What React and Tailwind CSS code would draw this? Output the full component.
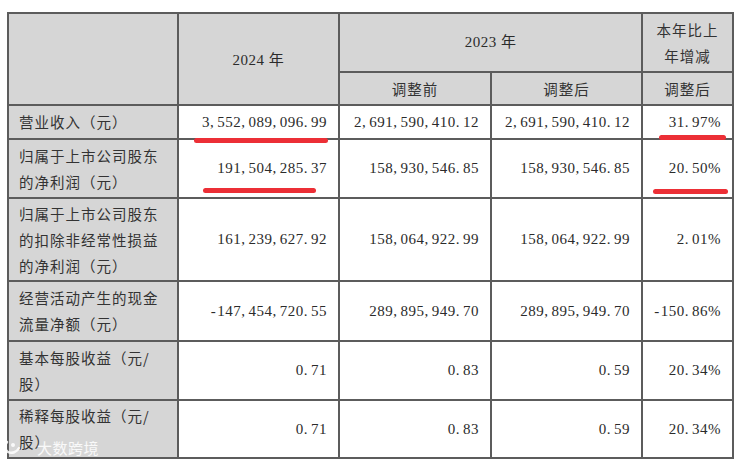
import React from "react";

const num = "font-['Liberation_Serif','Noto_Sans_CJK_SC',serif] text-[15px] tracking-[0.5px] text-[#2b2b2b]";
const cjk = "font-['Noto_Sans_CJK_SC','Liberation_Serif',sans-serif] text-[14.5px] tracking-[1px] text-[#333] leading-[26px]";
const cell = "border-2 border-[#5c5c5c] align-middle";

const rows = [
  { label: ["营业收入（元）"], h: "h-[34px]", v: ["3,552,089,096.99", "2,691,590,410.12", "2,691,590,410.12", "31.97%"] },
  { label: ["归属于上市公司股东", "的净利润（元）"], h: "h-[59px]", v: ["191,504,285.37", "158,930,546.85", "158,930,546.85", "20.50%"] },
  { label: ["归属于上市公司股东", "的扣除非经常性损益", "的净利润（元）"], h: "h-[83px]", v: ["161,239,627.92", "158,064,922.99", "158,064,922.99", "2.01%"] },
  { label: ["经营活动产生的现金", "流量净额（元）"], h: "h-[60px]", v: ["-147,454,720.55", "289,895,949.70", "289,895,949.70", "-150.86%"] },
  { label: ["基本每股收益（元/", "股）"], h: "h-[59px]", v: ["0.71", "0.83", "0.59", "20.34%"] },
  { label: ["稀释每股收益（元/", "股）"], h: "h-[58px]", v: ["0.71", "0.83", "0.59", "20.34%"] },
];

// the source table uses full-width punctuation, so give commas and points some room
function Num({ value }) {
  return (
    <>
      {value.split("").map((ch, i) =>
        ch === "," || ch === "." ? (
          <span key={i} className="pr-[3px]">{ch}</span>
        ) : ch === "-" ? (
          <span key={i} className="pr-[1px]">{ch}</span>
        ) : (
          ch
        )
      )}
    </>
  );
}

export default function App() {
  return (
    <div className="relative w-[736px] h-[464px] bg-white overflow-hidden">
      <div className="pt-[12px] pl-[7px]">
        <table className="w-[725px] table-fixed border-collapse">
          <colgroup>
            <col className="w-[170px]" />
            <col className="w-[161px]" />
            <col className="w-[152px]" />
            <col className="w-[151px]" />
            <col className="w-[91px]" />
          </colgroup>
          <thead>
            <tr className="h-[59px] bg-[#d6d6d6]">
              <th rowSpan={2} className={cell}></th>
              <th rowSpan={2} className={`${cell} ${num} font-normal text-center pt-[2px]`}>2024 年</th>
              <th colSpan={2} className={`${cell} ${num} font-normal text-center`}>2023 年</th>
              <th className={`${cell} ${cjk} font-normal text-center`}>
                本年比上<br />年增减
              </th>
            </tr>
            <tr className="h-[33px] bg-[#d6d6d6]">
              <th className={`${cell} ${cjk} font-normal text-center`}>调整前</th>
              <th className={`${cell} ${cjk} font-normal text-center`}>调整后</th>
              <th className={`${cell} ${cjk} font-normal text-center`}>调整后</th>
            </tr>
          </thead>
          <tbody>
            {rows.map((r, i) => (
              <tr key={i} className={r.h}>
                <td className={`${cell} ${cjk} bg-[#d6d6d6] pl-[10px]`}>
                  {r.label.map((l, j) => (
                    <div key={j}>{l}</div>
                  ))}
                </td>
                {r.v.map((v, j) => (
                  <td key={j} className={`${cell} ${num} bg-white text-right pr-[11px]`}>
                    <Num value={v} />
                  </td>
                ))}
              </tr>
            ))}
          </tbody>
        </table>
      </div>

      {/* red marker underlines */}
      <span className="absolute left-[194px] top-[138px] w-[134px] h-[5px] rounded-full bg-[#ec2f36]" />
      <span className="absolute left-[203px] top-[188px] w-[113px] h-[5px] rounded-full bg-[#ec2f36]" />
      <span className="absolute left-[659px] top-[135px] w-[67px] h-[5px] rounded-full bg-[#ec2f36]" />
      <span className="absolute left-[653px] top-[189px] w-[75px] h-[5px] rounded-full bg-[#ec2f36]" />

      {/* watermark */}
      <div className="absolute left-[3px] top-[439px] flex items-center gap-[16px] text-white/85">
        <svg width="18" height="16" viewBox="0 0 18 16" fill="none">
          <path d="M4 3 C1 6 1 11 5 13 C9 15 14 13 16 9" stroke="white" strokeOpacity="0.85" strokeWidth="2.5" strokeLinecap="round" />
          <circle cx="10" cy="6" r="2" fill="white" fillOpacity="0.85" />
        </svg>
        <span className="font-['Noto_Sans_CJK_SC',sans-serif] text-[15px] tracking-[0.5px] leading-none">大数跨境</span>
      </div>
    </div>
  );
}
